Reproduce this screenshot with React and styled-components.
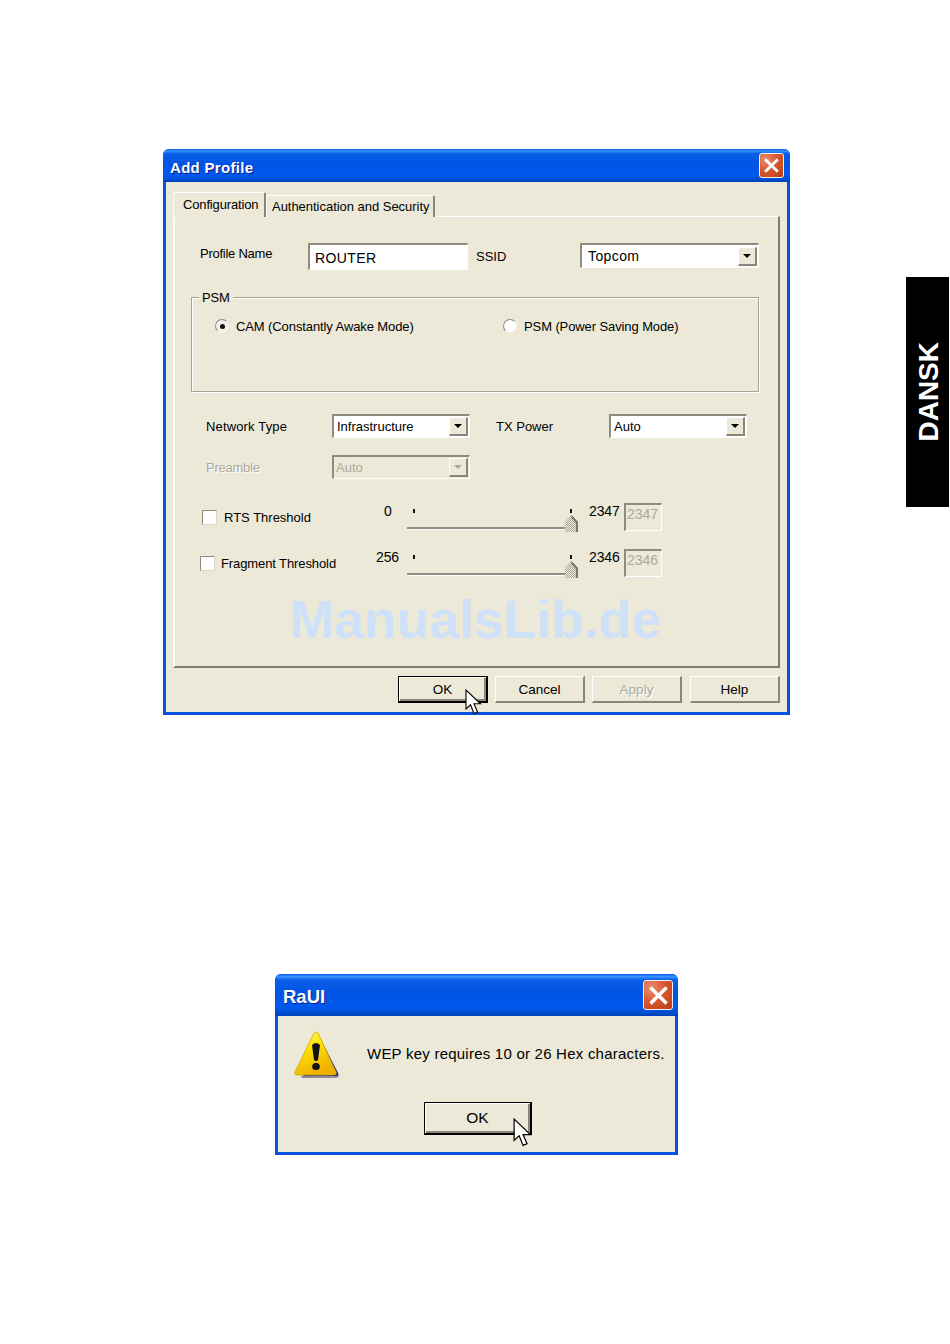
import React from "react";
import styled, { createGlobalStyle } from "styled-components";

const GlobalStyle = createGlobalStyle`
  html, body {
    margin: 0;
    background: #fff;
  }
  body {
    font-family: "Liberation Sans", Arial, sans-serif;
    color: #000;
  }
`;

const face = "#ece9d8";
const shade = "#8a8778";
const groove = "#a7a493";
const muted = "#aca899";

const Page = styled.div`
  width: 950px;
  height: 1344px;
  display: flex;
  flex-direction: column;
  overflow: hidden;
`;

const TopRow = styled.div`
  display: flex;
  align-items: flex-start;
  margin: 149px 0 0 163px;
`;

const SideTab = styled.div`
  width: 43px;
  height: 230px;
  margin: 128px 0 0 116px;
  background: #000;
  color: #fff;
  display: flex;
  align-items: center;
  justify-content: center;
  padding-left: 2px;
  box-sizing: border-box;

  span {
    writing-mode: vertical-rl;
    transform: rotate(180deg);
    font-size: 28px;
    font-weight: 700;
    line-height: 1;
  }
`;

const Dialog = styled.section`
  width: ${(p) => p.$width}px;
  box-sizing: border-box;
  flex: none;
  border-radius: 6px 6px 0 0;
  background: #0a50e0;
  padding: 0 3px 3px;
  margin-left: ${(p) => p.$left || 0}px;
  margin-top: ${(p) => p.$top || 0}px;
`;

const TitleBar = styled.header`
  height: ${(p) => p.$height}px;
  box-sizing: border-box;
  margin: 0 -3px;
  padding: 0 ${(p) => p.$pad}px 0 7px;
  border-radius: 6px 6px 0 0;
  display: flex;
  align-items: center;
  justify-content: space-between;
  background: linear-gradient(
    to bottom,
    #0058ee 0%,
    #3a93ff 6%,
    #0a5fe8 14%,
    #0054e3 45%,
    #0058ee 78%,
    #0050d8 90%,
    #0040b8 100%
  );
`;

const Title = styled.h1`
  margin: ${(p) => p.$nudge}px 0 0 ${(p) => p.$left || 0}px;
  font-size: ${(p) => p.$size}px;
  letter-spacing: ${(p) => p.$spacing || 0}px;
  font-weight: 700;
  color: #fff;
  text-shadow: 1px 1px 0 #0f1a89;
`;

const CloseButton = styled.div`
  width: ${(p) => p.$size}px;
  height: ${(p) => p.$size}px;
  box-sizing: border-box;
  border: 1px solid #f4f0ee;
  border-radius: 3px;
  background: radial-gradient(circle at 25% 25%, #ea9072 0%, #d9582f 45%, #b93a12 100%);
  display: flex;
  align-items: center;
  justify-content: center;
`;

const Body = styled.div`
  background: ${face};
  padding: ${(p) => p.$padding};
`;

const TabStrip = styled.div`
  display: flex;
  align-items: flex-end;
  position: relative;
  z-index: 1;
  margin-bottom: -1px;
`;

const Tab = styled.div`
  box-sizing: border-box;
  width: ${(p) => p.$width}px;
  height: ${(p) => (p.$active ? 25 : 22)}px;
  padding-left: ${(p) => p.$pad}px;
  font-size: 13px;
  letter-spacing: ${(p) => (p.$active ? -0.15 : -0.03)}px;
  line-height: ${(p) => (p.$active ? 23 : 21)}px;
  background: ${face};
  border-top: 1px solid #fff;
  border-left: 1px solid #fff;
  border-right: 2px solid ${shade};
  border-radius: 2px 2px 0 0;
  white-space: nowrap;
`;

const Panel = styled.div`
  box-sizing: border-box;
  height: 452px;
  display: flex;
  flex-direction: column;
  border-top: 1px solid #fff;
  border-left: 2px solid #fff;
  border-right: 2px solid #7d7a6c;
  border-bottom: 2px solid #7d7a6c;
`;

const Row = styled.div`
  display: flex;
  align-items: center;
  height: ${(p) => p.$height}px;
  margin-top: ${(p) => p.$top}px;
  margin-left: ${(p) => p.$indent}px;
`;

const Label = styled.div`
  width: ${(p) => p.$width}px;
  flex: none;
  font-size: 13px;
  white-space: nowrap;
  color: ${(p) => (p.$disabled ? muted : "#000")};
  text-shadow: ${(p) => (p.$disabled ? "1px 1px 0 #fff" : "none")};
  letter-spacing: ${(p) => p.$spacing || 0}px;
  margin: ${(p) => p.$nudge || 0}px 0 0 ${(p) => p.$left || 0}px;
`;

const sunken = `
  box-sizing: border-box;
  border-top: 2px solid #8f8c7d;
  border-left: 2px solid #8f8c7d;
  border-right: 1px solid #fff;
  border-bottom: 1px solid #fff;
`;

const TextField = styled.div`
  ${sunken}
  width: ${(p) => p.$width}px;
  height: 100%;
  flex: none;
  background: #fff;
  padding: 5px 0 0 5px;
  font-size: 14px;
  letter-spacing: 0.4px;
`;

const Select = styled.div`
  ${sunken}
  width: ${(p) => p.$width}px;
  height: ${(p) => p.$height}px;
  flex: none;
  align-self: ${(p) => (p.$alignTop ? "flex-start" : "center")};
  display: flex;
  align-items: center;
  justify-content: space-between;
  padding: 0 1px 0 ${(p) => p.$pad}px;
  background: ${(p) => (p.$disabled ? face : "#fff")};
  color: ${(p) => (p.$disabled ? muted : "#000")};
  font-size: ${(p) => p.$font}px;
  letter-spacing: ${(p) => p.$spacing || 0}px;
`;

const SelectArrow = styled.span`
  flex: none;
  box-sizing: border-box;
  width: 19px;
  height: 19px;
  background: ${face};
  border-top: 1px solid #fff;
  border-left: 1px solid #fff;
  border-right: 2px solid ${shade};
  border-bottom: 2px solid ${shade};
  display: flex;
  align-items: center;
  justify-content: center;

  &::after {
    content: "";
    border-left: 4px solid transparent;
    border-right: 4px solid transparent;
    border-top: 4px solid ${(p) => (p.$disabled ? muted : "#000")};
  }
`;

const Group = styled.fieldset`
  box-sizing: border-box;
  width: 568px;
  height: 102px;
  min-width: 0;
  margin: 20px 0 0 16px;
  padding: 14px 0 0;
  border: 1px solid ${groove};
  box-shadow: 1px 1px 0 #fff, inset 1px 1px 0 #fff;

  legend {
    margin-left: 7px;
    padding: 0 3px;
    font-size: 13px;
    letter-spacing: -0.2px;
    background: ${face};
  }
`;

const RadioRow = styled.div`
  display: flex;
  align-items: flex-start;
  padding-left: 23px;
`;

const RadioOption = styled.label`
  width: ${(p) => p.$width}px;
  display: flex;
  align-items: center;
  gap: 7px;
  height: 14px;
  font-size: 13px;
  letter-spacing: -0.1px;
  white-space: nowrap;
`;

const RadioMark = styled.span`
  box-sizing: border-box;
  flex: none;
  width: 14px;
  height: 14px;
  border-radius: 50%;
  background: ${(p) => (p.$checked ? "#f4f2ea" : "#fff")};
  border: 1px solid #8f8d80;
  border-right-color: #f3f1e6;
  border-bottom-color: #f3f1e6;
  margin-top: ${(p) => (p.$checked ? 0 : -1)}px;
  display: flex;
  align-items: center;
  justify-content: center;

  &::after {
    content: "";
    width: 5px;
    height: 5px;
    border-radius: 50%;
    background: ${(p) => (p.$checked ? "#111" : "transparent")};
  }
`;

const CheckField = styled.label`
  width: ${(p) => p.$width}px;
  flex: none;
  display: flex;
  align-items: center;
  gap: ${(p) => p.$gap}px;
  font-size: 13px;
  letter-spacing: ${(p) => p.$spacing || 0}px;
  white-space: nowrap;
  align-self: center;
`;

const CheckBox = styled.span`
  ${sunken}
  flex: none;
  width: 15px;
  height: 15px;
  background: #fff;
  border-width: 1px;
  border-top-color: #8f8c7d;
  border-left-color: #8f8c7d;
  border-right-color: #dcd9c9;
  border-bottom-color: #dcd9c9;
`;

const RangeValue = styled.div`
  width: ${(p) => p.$width}px;
  flex: none;
  align-self: flex-start;
  font-size: 14px;
  line-height: 16px;
  letter-spacing: -0.1px;
`;

const Slider = styled.div`
  position: relative;
  width: 171px;
  height: 100%;
  flex: none;
  margin-right: 11px;
`;

const Tick = styled.span`
  position: absolute;
  top: 6px;
  left: ${(p) => p.$left}px;
  width: 2px;
  height: 4px;
  background: #111;
`;

const Track = styled.span`
  position: absolute;
  top: 24px;
  left: 0;
  right: 12px;
  height: 3px;
  box-sizing: border-box;
  border-top: 2px solid #918e7f;
  border-bottom: 1px solid #fff;
`;

const Thumb = styled.svg`
  position: absolute;
  top: 12px;
  right: 0;
`;

const ValueBox = styled.div`
  ${sunken}
  width: 38px;
  height: 28px;
  flex: none;
  padding: 1px 0 0 1px;
  font-size: 14px;
  color: ${muted};
  background: ${face};
`;

const Watermark = styled.div`
  margin-top: 16px;
  padding-right: 2px;
  text-align: center;
  font-size: 53.5px;
  line-height: 53px;
  font-weight: 700;
  color: #cfe1f8;
`;

const ButtonRow = styled.div`
  display: flex;
  justify-content: flex-end;
  gap: 7px;
  margin-top: 8px;
`;

const Button = styled.div`
  position: relative;
  box-sizing: border-box;
  width: ${(p) => p.$width}px;
  height: ${(p) => p.$height}px;
  margin-left: ${(p) => p.$left || 0}px;
  display: flex;
  align-items: center;
  justify-content: center;
  font-size: ${(p) => p.$font || 13.5}px;
  background: ${face};
  color: ${(p) => (p.$disabled ? muted : "#000")};
  text-shadow: ${(p) => (p.$disabled ? "1px 1px 0 #fff" : "none")};
  border-top: 1px solid #fff;
  border-left: 1px solid #fff;
  border-right: 2px solid ${shade};
  border-bottom: 2px solid ${shade};
`;

const DefaultButton = styled(Button)`
  border: 1px solid #000;
  border-right-width: 2px;
  border-bottom-width: 2px;
  box-shadow: inset 1px 1px 0 #fff, inset -2px -2px 0 ${shade};
`;

const CursorMark = styled.svg`
  position: absolute;
  left: ${(p) => p.$left}px;
  top: ${(p) => p.$top}px;
`;

const AlertRow = styled.div`
  display: flex;
  align-items: flex-start;
  padding-left: 16px;
`;

const AlertText = styled.p`
  margin: 14px 0 0 27px;
  font-size: 15px;
  letter-spacing: 0.23px;
  white-space: nowrap;
`;

const AlertActions = styled.div`
  display: flex;
  justify-content: center;
  margin: 23px 0 0 3px;
`;

const CloseIcon = ({ size }) => (
  <svg width={size} height={size} viewBox="0 0 14 14">
    <path d="M2 2 L12 12 M12 2 L2 12" stroke="#fff" strokeWidth="2.6" strokeLinecap="square" />
  </svg>
);

const Cursor = ({ left, top, scale = 1 }) => (
  <CursorMark $left={left} $top={top} width={18 * scale} height={26 * scale} viewBox="0 0 18 26">
    <path
      d="M1 1 L1 20 L5.5 15.8 L9 24.5 L12.5 23 L9 14.8 L15.5 14.8 Z"
      fill="#fff"
      stroke="#000"
      strokeWidth="1.1"
      strokeLinejoin="miter"
    />
  </CursorMark>
);

const WarningIcon = () => (
  <svg width="46" height="48" viewBox="0 0 46 48">
    <defs>
      <linearGradient id="warnFill" x1="0" y1="0" x2="0.4" y2="1">
        <stop offset="0" stopColor="#fff58a" />
        <stop offset="0.4" stopColor="#ffe600" />
        <stop offset="1" stopColor="#eeb000" />
      </linearGradient>
    </defs>
    <path d="M25 5 L45 44 Q45 47 41 47 L7 47 Z" fill="#8d8a9a" />
    <path d="M24 3 L44 42 Q45 45 41 45 L10 45 Z" fill="#1d2a7a" />
    <path d="M20 2 Q22 0 24 2 L42 41 Q43 44 40 44 L3 44 Q0 44 1 41 Z" fill="url(#warnFill)" stroke="#d8a800" strokeWidth="0.8" />
    <path d="M18 14 Q22 10 26 14 L24 29 Q22 31 20 29 Z" fill="#111" />
    <ellipse cx="22" cy="35.5" rx="3.8" ry="3.6" fill="#111" />
  </svg>
);

const SliderThumb = ({ id }) => (
  <Thumb width="13" height="17" viewBox="0 0 13 17">
    <defs>
      <pattern id={id} width="2" height="2" patternUnits="userSpaceOnUse">
        <rect width="2" height="2" fill="#ece9d8" />
        <rect width="1" height="1" fill="#a9a698" />
        <rect x="1" y="1" width="1" height="1" fill="#a9a698" />
      </pattern>
    </defs>
    <path d="M6.5 0 L13 7 L13 17 L0 17 L0 7 Z" fill={`url(#${id})`} />
    <path d="M6.5 0 L13 7 L13 17 L11 17 L11 8 L6.5 3 Z" fill="#77746a" />
  </Thumb>
);

const ThresholdRow = ({ top, indent, name, fieldWidth, gap, spacing, min, minWidth, max }) => (
  <Row $height={28} $top={top} $indent={indent}>
    <CheckField $width={fieldWidth} $gap={gap} $spacing={spacing}>
      <CheckBox />
      {name}
    </CheckField>
    <RangeValue $width={minWidth}>{min}</RangeValue>
    <Slider>
      <Tick $left={6} />
      <Track />
      <Tick $left={163} />
      <SliderThumb id={`thumb${max}`} />
    </Slider>
    <RangeValue $width={35}>{max}</RangeValue>
    <ValueBox>{max}</ValueBox>
  </Row>
);

const AddProfile = () => (
  <Dialog $width={627}>
    <TitleBar $height={33} $pad={6}>
      <Title $size={15} $spacing={0.3} $nudge={4}>Add Profile</Title>
      <CloseButton $size={25}>
        <CloseIcon size={15} />
      </CloseButton>
    </TitleBar>
    <Body $padding="10px 7px 9px">
      <TabStrip>
        <Tab $active $width={93} $pad={9}>Configuration</Tab>
        <Tab $width={169} $pad={5}>Authentication and Security</Tab>
      </TabStrip>
      <Panel>
        <Row $height={27} $top={26} $indent={25}>
          <Label $width={108} $nudge={-6} $spacing={-0.25}>Profile Name</Label>
          <TextField $width={160}>ROUTER</TextField>
          <Label $width={104} $left={8}>SSID</Label>
          <Select $width={179} $height={25} $pad={6} $font={14} $spacing={0.4} $alignTop>
            Topcom
            <SelectArrow />
          </Select>
        </Row>
        <Group>
          <legend>PSM</legend>
          <RadioRow>
            <RadioOption $width={288}>
              <RadioMark $checked />
              CAM (Constantly Awake Mode)
            </RadioOption>
            <RadioOption>
              <RadioMark />
              PSM (Power Saving Mode)
            </RadioOption>
          </RadioRow>
        </Group>
        <Row $height={24} $top={22} $indent={31}>
          <Label $width={126} $spacing={0.15}>Network Type</Label>
          <Select $width={138} $height={24} $pad={3} $font={13}>
            Infrastructure
            <SelectArrow />
          </Select>
          <Label $width={113} $left={26}>TX Power</Label>
          <Select $width={138} $height={24} $pad={3} $font={13}>
            Auto
            <SelectArrow />
          </Select>
        </Row>
        <Row $height={24} $top={17} $indent={31}>
          <Label $width={126} $disabled $spacing={-0.25}>Preamble</Label>
          <Select $width={138} $height={24} $pad={2} $font={13} $disabled>
            Auto
            <SelectArrow $disabled />
          </Select>
        </Row>
        <ThresholdRow top={24} indent={27} name="RTS Threshold" fieldWidth={182} gap={7} min="0" minWidth={23} max="2347" />
        <ThresholdRow top={18} indent={25} name="Fragment Threshold" fieldWidth={176} gap={6} spacing={-0.1} min="256" minWidth={31} max="2346" />
        <Watermark>ManualsLib.de</Watermark>
      </Panel>
      <ButtonRow>
        <DefaultButton $width={90} $height={27}>
          OK
          <Cursor left={66} top={12} />
        </DefaultButton>
        <Button $width={90} $height={27}>Cancel</Button>
        <Button $width={90} $height={27} $disabled>Apply</Button>
        <Button $width={90} $height={27} $left={1}>Help</Button>
      </ButtonRow>
    </Body>
  </Dialog>
);

const WepAlert = () => (
  <Dialog $width={403} $left={275} $top={259}>
    <TitleBar $height={42} $pad={5}>
      <Title $size={18.5} $nudge={3} $left={1}>RaUI</Title>
      <CloseButton $size={30}>
        <CloseIcon size={19} />
      </CloseButton>
    </TitleBar>
    <Body $padding="15px 0 17px">
      <AlertRow>
        <WarningIcon />
        <AlertText>WEP key requires 10 or 26 Hex characters.</AlertText>
      </AlertRow>
      <AlertActions>
        <DefaultButton $width={108} $height={33} $font={15.5}>
          OK
          <Cursor left={88} top={15} scale={1.12} />
        </DefaultButton>
      </AlertActions>
    </Body>
  </Dialog>
);

export default function App() {
  return (
    <>
      <GlobalStyle />
      <Page>
        <TopRow>
          <AddProfile />
          <SideTab>
            <span>DANSK</span>
          </SideTab>
        </TopRow>
        <WepAlert />
      </Page>
    </>
  );
}
